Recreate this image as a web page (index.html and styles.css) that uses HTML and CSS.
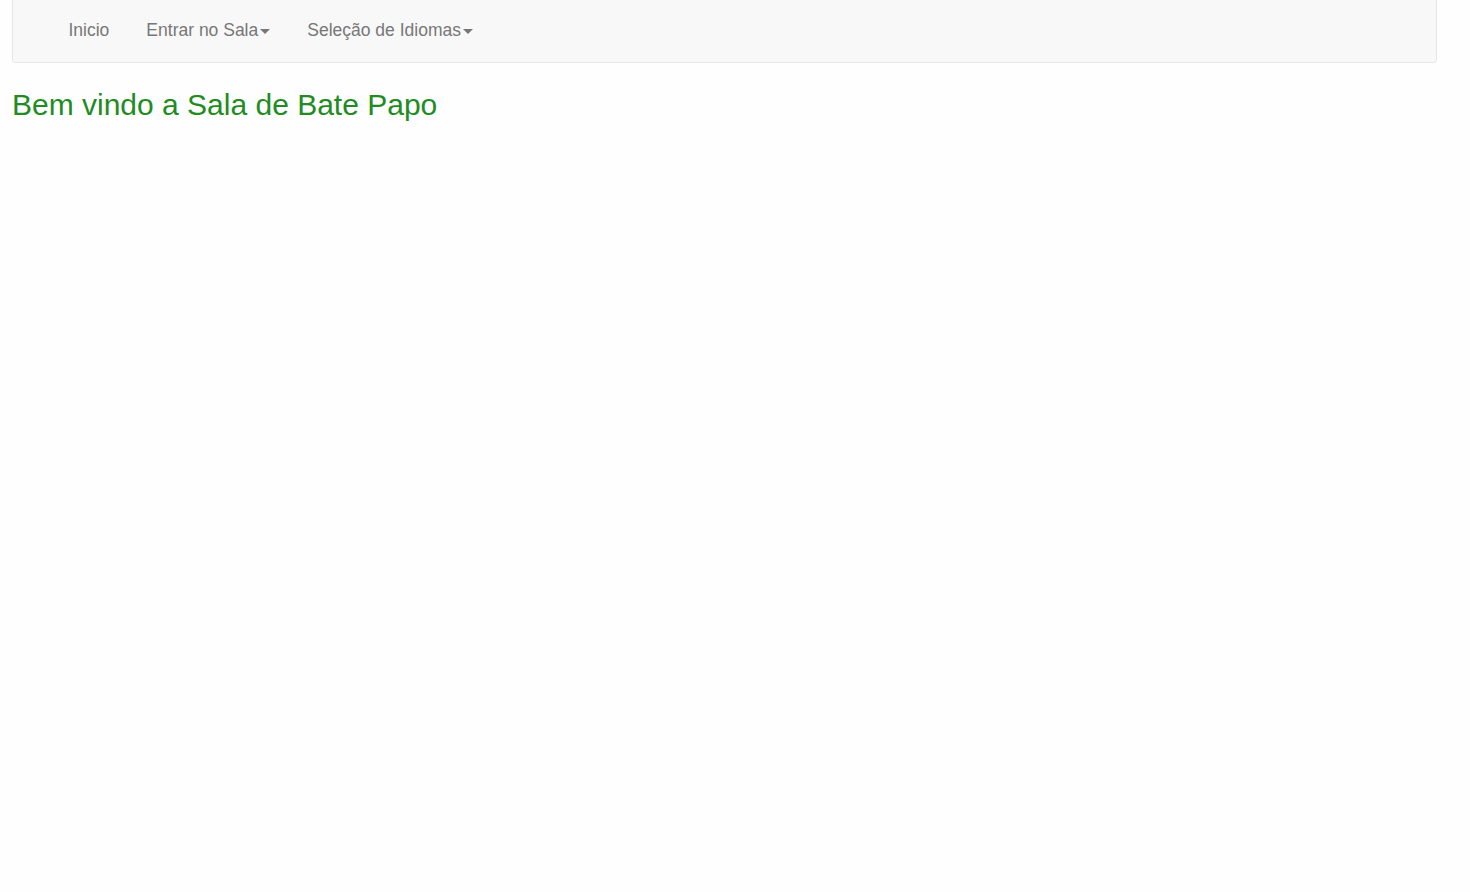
FILE: index.html
```html
<!DOCTYPE html>
<html lang="pt">
<head>
<meta charset="utf-8">
<title>Sala de Bate Papo</title>
<link rel="stylesheet" href="styles.css">
</head>
<body>
<nav class="navbar">
  <ul class="nav">
    <li><a href="#">Inicio</a></li>
    <li><a href="#">Entrar no Sala<span class="caret"></span></a></li>
    <li><a href="#">Seleção de Idiomas<span class="caret"></span></a></li>
  </ul>
</nav>
<h1 class="title">Bem vindo a Sala de Bate Papo</h1>
</body>
</html>
```
FILE: styles.css
```css
html, body {
  margin: 0;
  padding: 0;
  background: #fefefe;
  font-family: "Liberation Sans", Arial, sans-serif;
}
body {
  padding: 0 33px 0 12px;
}
.navbar {
  height: 63px;
  box-sizing: border-box;
  background: #f8f8f8;
  border: 1px solid #e7e7e7;
  border-top: none;
  border-radius: 0 0 4px 4px;
  display: flex;
  align-items: center;
  padding-left: 37px;
}
.nav {
  list-style: none;
  margin: 0;
  padding: 0;
  display: flex;
  margin-top: -2px;
}
.nav a {
  display: block;
  padding: 0 18.5px;
  color: #777;
  text-decoration: none;
  font-size: 17.5px;
  line-height: 20px;
}
.caret {
  display: inline-block;
  width: 0;
  height: 0;
  margin-left: 2px;
  vertical-align: middle;
  border-top: 5px solid #777;
  border-left: 5px solid transparent;
  border-right: 5px solid transparent;
}
.title {
  margin: 24px 0 0;
  font-weight: normal;
  font-size: 30px;
  line-height: 36px;
  color: #228b22;
}
```
